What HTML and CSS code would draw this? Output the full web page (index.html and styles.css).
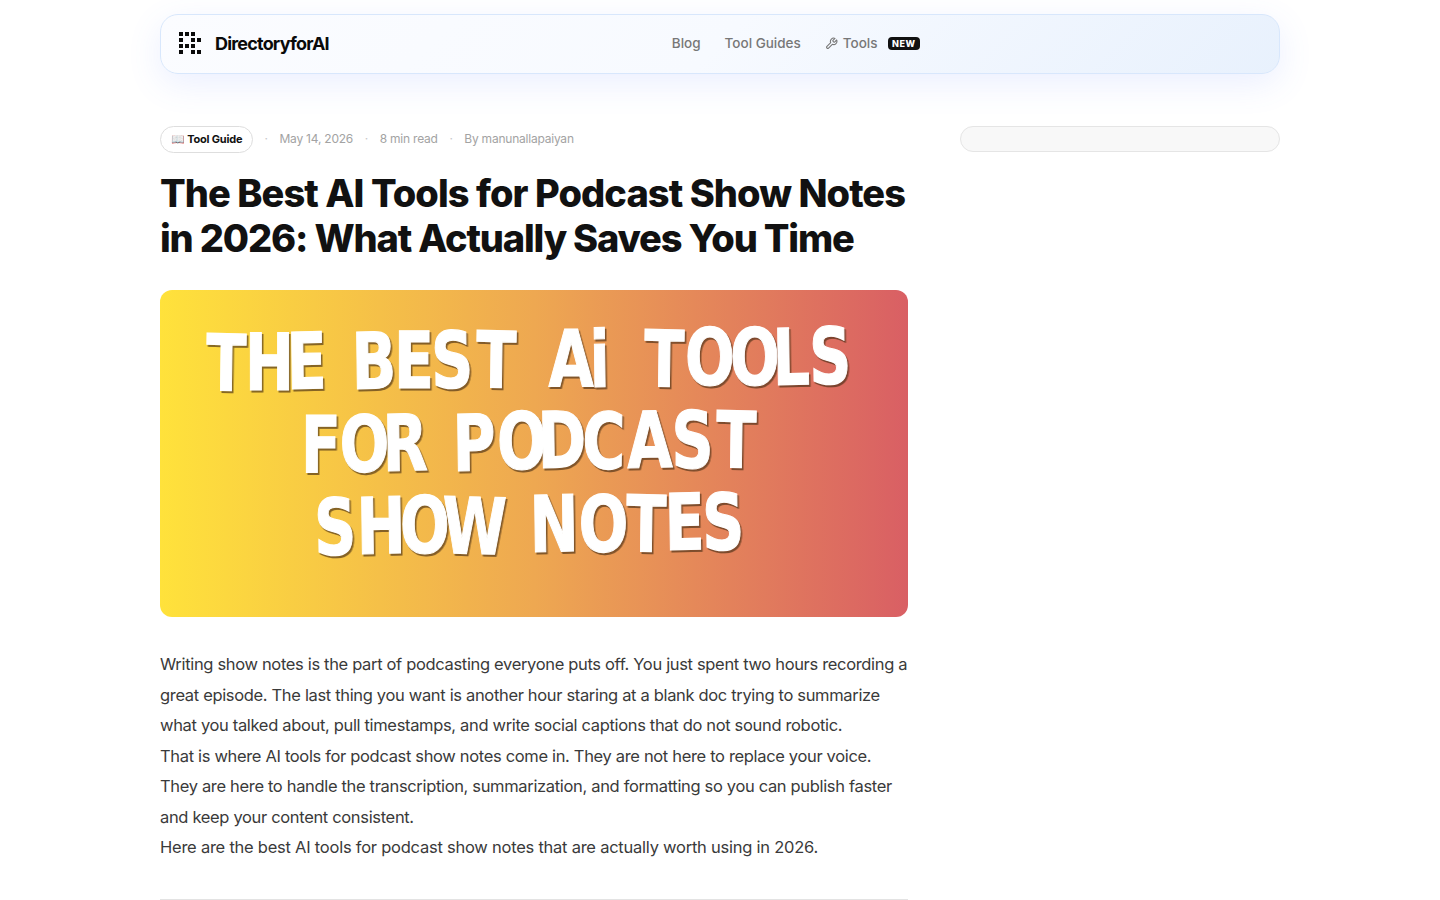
FILE: index.html
```html
<!DOCTYPE html>
<html lang="en">
<head>
<meta charset="utf-8">
<title>The Best AI Tools for Podcast Show Notes in 2026</title>
<link rel="stylesheet" href="styles.css">
</head>
<body>
<div class="wrap">
  <header class="topbar">
    <a class="brand" href="#">
      <svg class="brand-mark" width="22" height="22" viewBox="0 0 22 22" fill="#0a0a0a" aria-hidden="true">
        <rect x="0" y="0" width="4" height="4"/><rect x="6" y="0" width="4" height="4"/><rect x="12" y="0" width="4" height="4"/>
        <rect x="0" y="6" width="4" height="4"/><rect x="12" y="6" width="4" height="4"/><rect x="18" y="6" width="4" height="4"/>
        <rect x="0" y="12" width="4" height="4"/><rect x="6" y="12" width="4" height="4"/><rect x="12" y="12" width="4" height="4"/>
        <rect x="0" y="18" width="4" height="4"/><rect x="12" y="18" width="4" height="4"/><rect x="18" y="18" width="4" height="4"/>
      </svg>
      <span class="brand-name">DirectoryforAI</span>
    </a>
    <nav class="nav">
      <a href="#">Blog</a>
      <a href="#">Tool Guides</a>
      <a class="nav-tools" href="#">
        <svg width="13" height="13" viewBox="0 0 24 24" fill="none" stroke="currentColor" stroke-width="2" stroke-linecap="round" stroke-linejoin="round" aria-hidden="true"><path d="M14.7 6.3a1 1 0 0 0 0 1.4l1.6 1.6a1 1 0 0 0 1.4 0l3.77-3.77a6 6 0 0 1-7.94 7.94l-6.91 6.91a2.12 2.12 0 0 1-3-3l6.91-6.91a6 6 0 0 1 7.94-7.94l-3.76 3.76z"/></svg>
        <span>Tools</span>
        <span class="badge">NEW</span>
      </a>
    </nav>
    <div class="topbar-end"></div>
  </header>

  <div class="layout">
    <main class="article">
      <div class="meta">
        <span class="pill">📖 Tool Guide</span>
        <span class="dot">·</span>
        <span>May 14, 2026</span>
        <span class="dot">·</span>
        <span>8 min read</span>
        <span class="dot">·</span>
        <span>By manunallapaiyan</span>
      </div>
      <h1 class="title"><span class="title-line-a">The Best AI Tools for Podcast Show Notes</span> <span class="title-line-b">in 2026: What Actually Saves You Time</span></h1>
      <div class="hero">
        <svg class="hero-art" width="748" height="327" viewBox="0 0 748 327" role="img" aria-label="The Best AI Tools for Podcast Show Notes">
          <g transform="scale(.75 1)">
            <text x="61.3 113.3 169.3 240 256 312 362 421.3 480 518 573.3 620 645.3 700 760 817.3 866" y="100 100 99 99 99 98 98 97 97 96 97 96 96 95 95 95 94" rotate="1 0 -1 0 -1 0 -1 1 0 0 -1 0 1 0 0 -1 -1">THE BEST Ai TOOLS</text>
            <text x="188 240 297.3 350 390.7 449.3 504 562.7 623.3 682 741.3" y="182 182 181 181 181 179 178 178 178 178 177" rotate="0 -1 -1 0 -1 0 -1 1 -1 0 1">FOR PODCAST</text>
            <text x="206 262.7 320 376 450 493.3 558.7 621.3 673.3 723.3" y="265 264 263 263 262 262 262 261 260 260" rotate="-1 -1 0 1 0 -1 -1 1 -1 -1">SHOW NOTES</text>
          </g>
        </svg>
      </div>
      <div class="prose">
        <p class="para-intro">Writing show notes is the part of podcasting everyone puts off. You just spent two hours recording a great episode. The last thing you want is another hour staring at a blank doc trying to summarize what you talked about, pull timestamps, and write social captions that do not sound robotic.</p>
        <p class="para-mid">That is where AI tools for podcast show notes come in. They are not here to replace your voice. They are here to handle the transcription, summarization, and formatting so you can publish faster and keep your content consistent.</p>
        <p class="para-end">Here are the best AI tools for podcast show notes that are actually worth using in 2026.</p>
      </div>
      <hr class="rule">
    </main>
    <aside class="sidebar">
      <div class="search-stub"></div>
    </aside>
  </div>
</div>
</body>
</html>
```

FILE: styles.css
```css
* { box-sizing: border-box; }
html, body { margin: 0; padding: 0; background: #fff; }
body { font-family: Inter, "Noto Sans", sans-serif; color: #111; height: 900px; overflow: hidden; }
a { color: inherit; text-decoration: none; }

.wrap { width: 1120px; margin: 0 auto; padding-top: 14px; }

.topbar {
  height: 60px;
  display: flex;
  align-items: center;
  justify-content: space-between;
  padding: 0 16px 2px 18px;
  border: 1px solid #d8e7fc;
  border-radius: 18px;
  background: linear-gradient(135deg, #fbfcff 0%, #f7faff 50%, #e8f1fd 100%);
  box-shadow: 0 10px 34px rgba(90, 120, 255, .12);
}
.brand { display: flex; align-items: center; gap: 14px; }
.brand-mark { display: block; }
.brand-name { font-size: 18px; font-weight: 700; letter-spacing: -.045em; color: #0a0a0a; }
.nav { display: flex; align-items: center; gap: 24px; font-size: 13.5px; font-weight: 500; color: #777; }
.nav-tools { display: flex; align-items: center; gap: 5px; }
.badge {
  margin-left: 5px;
  padding: 2px 4.5px;
  border-radius: 4px;
  background: #111;
  color: #fff;
  font-size: 9px;
  line-height: 9px;
  font-weight: 800;
  letter-spacing: .06em;
}
.topbar-end { width: 0; }

.layout { display: grid; grid-template-columns: 748px 320px; gap: 52px; margin-top: 52px; align-items: start; }

.meta { display: flex; align-items: center; gap: 11.7px; height: 27px; font-size: 12px; letter-spacing: -.22px; color: #a3a3a3; padding-bottom: 2px; }
.pill {
  height: 27px;
  display: flex;
  align-items: center;
  flex: none;
  margin-bottom: -2px;
  padding: 0 9.5px 2px 10px;
  border: 1px solid #dedede;
  border-radius: 14px;
  background: #fff;
  color: #111;
  font-size: 11px;
  letter-spacing: -.2px;
  font-weight: 700;
}
.dot { color: #c8c8c8; }

.title { margin: 18px 0 29px; font-size: 38px; line-height: 45px; font-weight: 800; color: #111; }
.title-line-a { letter-spacing: -.93px; }
.title-line-b { letter-spacing: -1.16px; }

.hero { height: 327px; border-radius: 12px; overflow: hidden; background: linear-gradient(90deg, #ffe23b 0%, #eea851 50%, #d95f64 100%); }
.hero-art { display: block; }
.hero-art text {
  font-family: "DejaVu Sans", sans-serif;
  font-weight: 700;
  font-size: 78px;
  fill: #fff;
  stroke: #fff;
  stroke-width: 1.2px;
  filter: drop-shadow(2px 2px 0 rgba(70, 45, 20, .65));
}

.prose { margin-top: 32px; font-size: 16.5px; line-height: 30.5px; color: #3a3a3a; }
.prose p { margin: 0; }
.para-intro { letter-spacing: -.335px; }
.para-mid { letter-spacing: -.335px; }
.para-end { letter-spacing: -.24px; }

.rule { margin: 36.5px 0 0; border: 0; border-top: 1px solid #e3e3e3; }

.search-stub { height: 26px; border: 1px solid #e5e5e5; border-radius: 13px; background: #f8f8f8; }
```
